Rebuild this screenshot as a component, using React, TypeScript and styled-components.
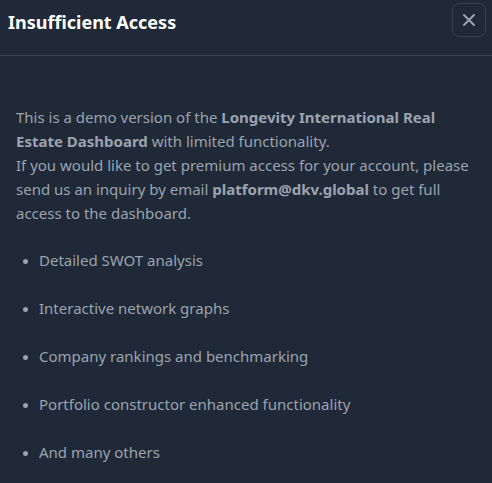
import React from 'react';
import styled, { createGlobalStyle } from 'styled-components';

const GlobalStyle = createGlobalStyle`
  html, body {
    margin: 0;
    padding: 0;
    background: #1f2937;
  }
  body {
    font-family: 'Noto Sans', 'Open Sans', sans-serif;
  }
`;

const Modal = styled.div`
  width: 492px;
  min-height: 483px;
  background: #1f2937;
  color: #9ca3af;
`;

const Header = styled.div`
  display: flex;
  align-items: center;
  justify-content: space-between;
  height: 56px;
  padding: 0 6px 0 8px;
  box-sizing: border-box;
  border-bottom: 1px solid #374151;
`;

const Title = styled.h3`
  margin: 0;
  margin-top: -11px;
  font-size: 18px;
  font-weight: 700;
  color: #ffffff;
`;

const CloseButton = styled.button`
  width: 34px;
  height: 34px;
  margin-top: -16px;
  display: flex;
  align-items: center;
  justify-content: center;
  background: transparent;
  border: 1px solid #374151;
  border-radius: 7px;
  color: #9ca3af;
  padding: 0;
  cursor: pointer;
`;

const Body = styled.div`
  padding: 49px 16px 16px;
  font-size: 15px;
  line-height: 24px;
`;

const Text = styled.p`
  margin: 0 0 23px;

  strong {
    font-weight: 700;
  }
`;

const List = styled.ul`
  margin: 0;
  padding-left: 23px;
`;

const Item = styled.li`
  margin-bottom: 24px;
  &::marker {
    font-size: 13px;
  }
`;

const features = [
  'Detailed SWOT analysis',
  'Interactive network graphs',
  'Company rankings and benchmarking',
  'Portfolio constructor enhanced functionality',
  'And many others',
];

export default function App() {
  return (
    <>
      <GlobalStyle />
      <Modal>
        <Header>
          <Title>Insufficient Access</Title>
          <CloseButton aria-label="Close">
            <svg width="14" height="14" viewBox="0 0 14 14" fill="none">
              <path d="M2 2L12 12M12 2L2 12" stroke="currentColor" strokeWidth="2" strokeLinecap="round" />
            </svg>
          </CloseButton>
        </Header>
        <Body>
          <Text>
            This is a demo version of the <strong>Longevity International Real Estate Dashboard</strong> with limited functionality.
            <br />
            If you would like to get premium access for your account, please send us an inquiry by email{' '}
            <strong>platform@dkv.global</strong> to get full access to the dashboard.
          </Text>
          <List>
            {features.map((f) => (
              <Item key={f}>{f}</Item>
            ))}
          </List>
        </Body>
      </Modal>
    </>
  );
}
